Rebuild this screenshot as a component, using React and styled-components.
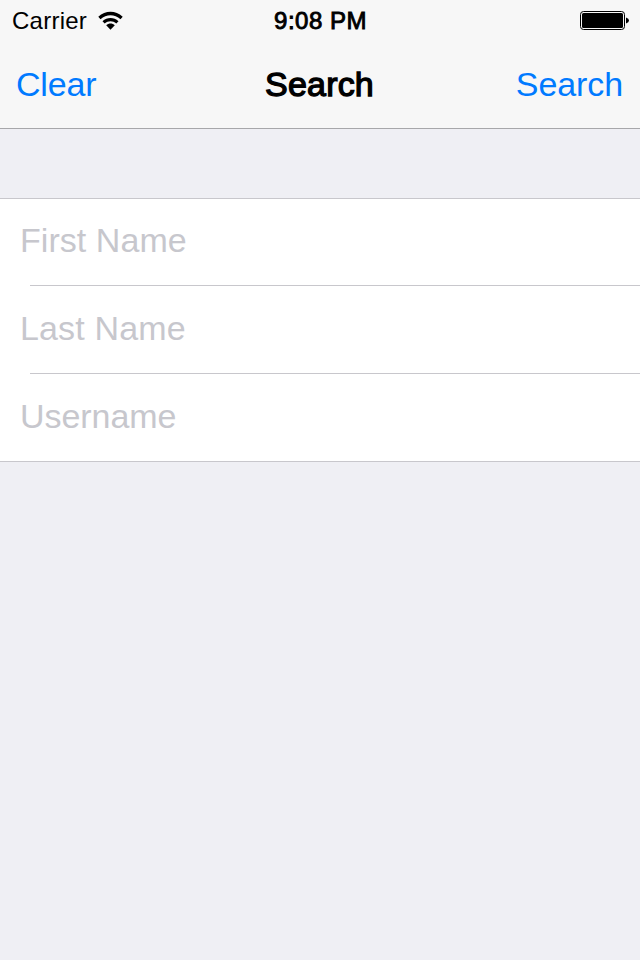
import React from "react";
import styled, { createGlobalStyle } from "styled-components";

const GlobalStyle = createGlobalStyle`
  * { box-sizing: border-box; }
  body { margin: 0; background: #efeff4; }
`;

const Screen = styled.div`
  width: 640px;
  height: 960px;
  background: #efeff4;
  font-family: "Liberation Sans", Arial, sans-serif;
  overflow: hidden;
`;

const Header = styled.header`
  height: 129px;
  background: #f7f7f7;
  border-bottom: 1px solid #a7a7aa;
`;

const StatusBar = styled.div`
  display: grid;
  grid-template-columns: 1fr auto 1fr;
  align-items: center;
  height: 40px;
  padding: 0 11px 0 12px;
  color: #000;
`;

const Carrier = styled.div`
  display: flex;
  align-items: center;
  gap: 11px;
`;

const Label = styled.span`
  display: inline-block;
  white-space: nowrap;
  line-height: 40px;
  font-size: ${(p) => p.$size}px;
  -webkit-text-stroke: ${(p) => p.$stroke || 0}px currentColor;
  letter-spacing: ${(p) => p.$track || 0}px;
`;

const StatusText = styled(Label)`
  line-height: 38px;
  padding-top: 2px;
`;

const Wifi = styled.svg`
  margin-top: 1px;
`;

const Battery = styled.svg`
  justify-self: end;
`;

const NavBar = styled.nav`
  display: grid;
  grid-template-columns: 1fr auto 1fr;
  align-items: center;
  height: 88px;
  padding: 0 17px 0 16px;
`;

const NavButton = styled.button`
  justify-self: ${(p) => p.$side};
  padding: 0;
  border: 0;
  background: none;
  color: #007aff;
  font-family: inherit;
`;

const Form = styled.form`
  margin-top: 69px;
  background: #fff;
  border-top: 1px solid #c8c7cc;
  border-bottom: 1px solid #c8c7cc;
`;

const Row = styled.label`
  display: flex;
  flex-direction: column;
  height: 88px;
  &:first-child { height: 87px; }
  &:last-child { height: 87px; }
`;

const Input = styled.input`
  height: 84px;
  margin-top: ${(p) => p.$first ? -1 : 0}px;
  width: 100%;
  padding: 0 20px;
  border: 0;
  outline: 0;
  background: transparent;
  font-family: inherit;
  font-size: 34px;
  letter-spacing: ${(p) => p.$track}px;
  &::placeholder { color: #c7c7cd; opacity: 1; }
`;

const Divider = styled.div`
  height: 1px;
  margin-top: auto;
  margin-left: 30px;
  background: #c8c7cc;
`;

const fields = [
  { name: "First Name", track: 0.05 },
  { name: "Last Name", track: 0.15 },
  { name: "Username", track: -0.05 },
];

export default function App() {
  return (
    <Screen>
      <GlobalStyle />
      <Header>
        <StatusBar>
          <Carrier>
            <StatusText $size={24} $track={0.25}>Carrier</StatusText>
            <Wifi width="26" height="20" viewBox="0 0 26 20">
              <path d="M0.3 5.8C7.4-0.8 17.6-0.8 24.7 5.8l-2.2 2.4C16.6 2.9 8.4 2.9 2.5 8.2z" />
              <path d="M4.5 10.2c4.6-4.3 11.4-4.3 16 0l-2.2 2.4c-3.4-3.1-8.2-3.1-11.6 0z" />
              <path d="M8.2 14.3c2.5-2.3 6.1-2.3 8.6 0l-4.3 4.5z" />
            </Wifi>
          </Carrier>
          <StatusText $size={24} $stroke={0.9} $track={0.5}>9:08 PM</StatusText>
          <Battery width="49" height="20" viewBox="0 0 49 20">
            <rect x="0.5" y="1.5" width="44" height="18" rx="3" fill="none" stroke="#000" />
            <rect x="2" y="3" width="41" height="15" rx="1.5" />
            <path d="M46 7.5q3 1 3 3t-3 3z" />
          </Battery>
        </StatusBar>
        <NavBar>
          <NavButton $side="start" type="button"><Label $size={34} $track={-0.2}>Clear</Label></NavButton>
          <Label $size={34} $stroke={1.3} $track={0.2}>Search</Label>
          <NavButton $side="end" type="button"><Label $size={34} $track={-0.1}>Search</Label></NavButton>
        </NavBar>
      </Header>
      <Form>
        {fields.map((f, i) => (
          <Row key={f.name}>
            <Input placeholder={f.name} aria-label={f.name} $track={f.track} $first={i === 0} />
            {i < fields.length - 1 && <Divider />}
          </Row>
        ))}
      </Form>
    </Screen>
  );
}
